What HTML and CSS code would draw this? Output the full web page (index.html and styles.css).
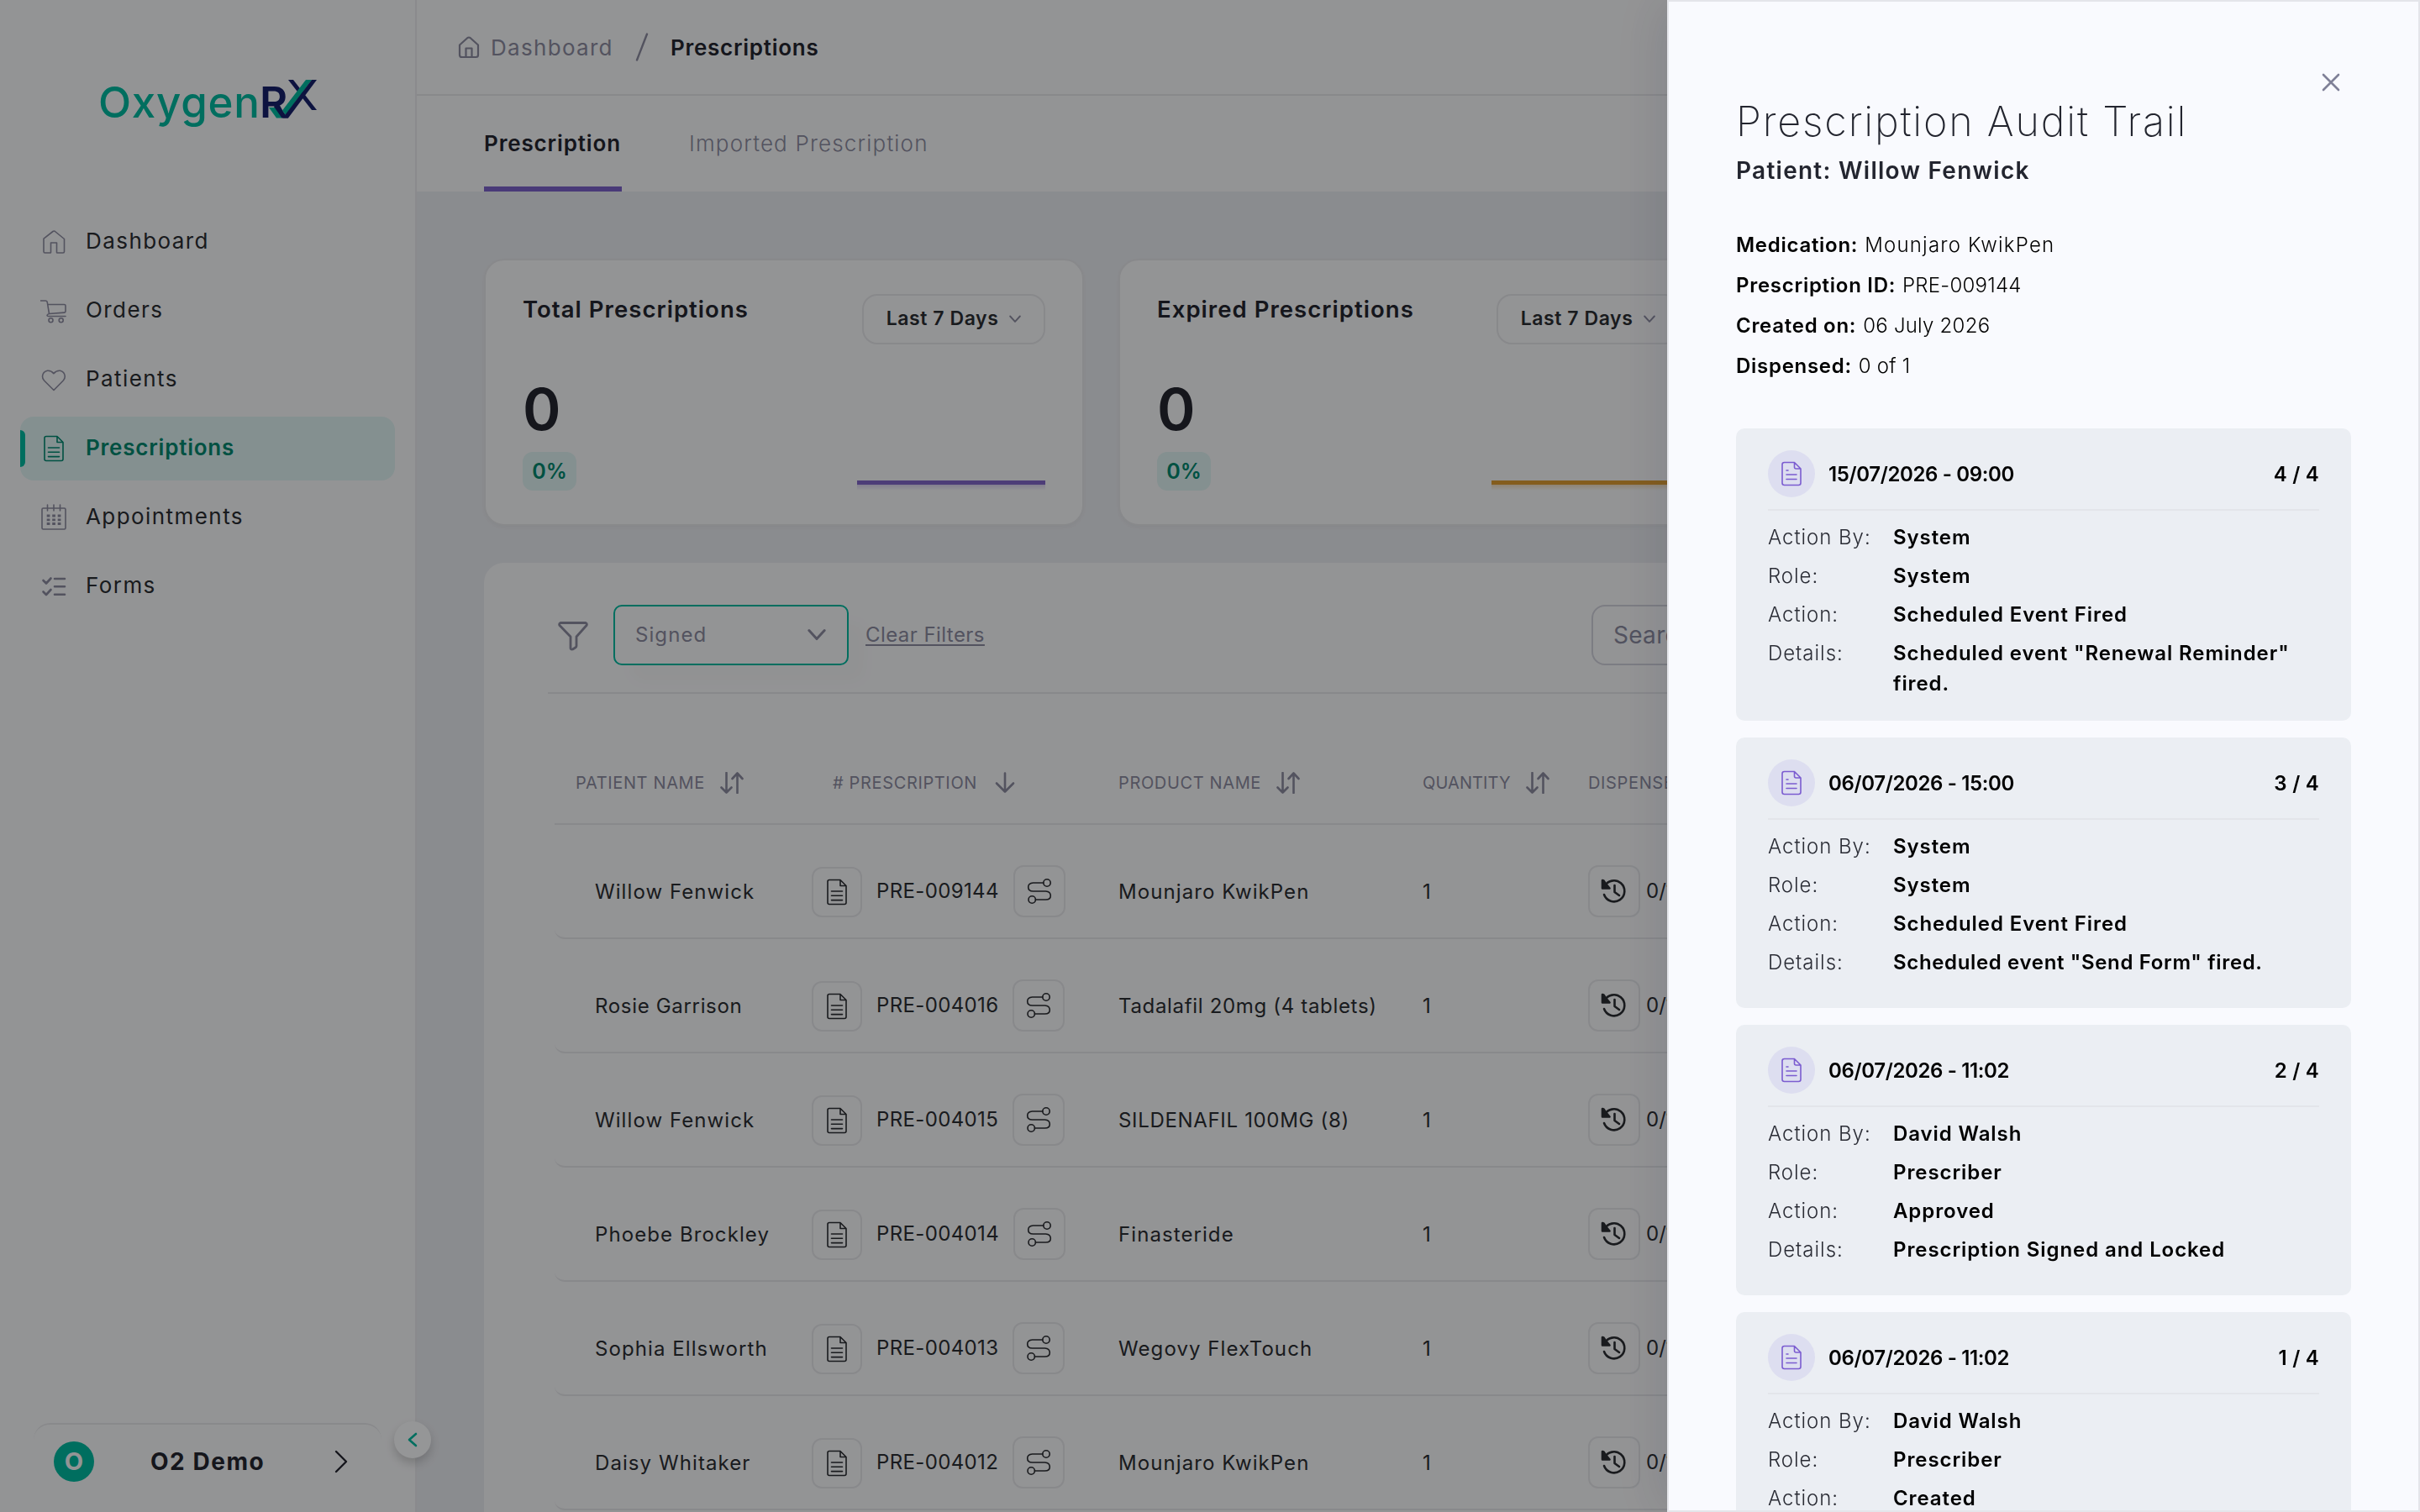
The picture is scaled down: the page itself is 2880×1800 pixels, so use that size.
FILE: index.html
```html
<!DOCTYPE html>
<html lang="en">
<head>
    <meta charset="UTF-8">
    <meta name="viewport" content="width=device-width, initial-scale=1.0">
    <title>OxygenRX - Prescriptions</title>
    <link rel="stylesheet" href="styles.css">
</head>
<body>

<!-- Icon sprite -->
<svg class="sprite" width="0" height="0">
    <symbol id="i-home" viewBox="0 0 32 32"><path d="M4 13.5V27.5Q4 29 5.5 29H12Q12.5 29 12.5 28.5V17H19.5V28.5Q19.500 29 20 29H27Q28.500 29 28.500 27.500V12.500L17.500 3.500Q16.250 2.600 15 3.500L4 12.200Z"/></symbol>
    <symbol id="i-cart" viewBox="0 0 32 32"><path d="M.5 4H6Q8 4 8.300 6L10.500 19.500Q8 20.200 8 21.500Q8 22.500 10 22.500H30M9 8.500H28.500Q30 8.500 30 10V16.500Q30 18 28.500 18.100L10.500 19.500"/><circle cx="12.500" cy="27.300" r="2.500"/><circle cx="24.700" cy="27.300" r="2.500"/></symbol>
    <symbol id="i-heart" viewBox="0 0 32 32"><path d="M16 28.500L4.500 17Q2.500 15 2.500 12Q3 6.500 8.500 5.300Q13 5 15.900 8.700Q19 5 23.500 5.300Q28.700 6.500 29.300 12Q29.300 15 27.300 17Z"/></symbol>
    <symbol id="i-doc" viewBox="0 0 32 32"><path d="M20 1.500H7Q5 1.500 5 3.500V28.500Q5 30.500 7 30.500H25Q27 30.500 27 28.500V8.500ZM20 1.500V8.500H27M9.500 15H22.500M9.500 20.300H22.500M9.500 25.600H22.500"/></symbol>
    <symbol id="i-note" viewBox="0 0 32 32"><path d="M19.500 2.500H7.500Q5 2.500 5 5V27Q5 29.500 7.500 29.500H24.500Q27 29.500 27 27V10L19.500 2.500V8Q19.500 10 21.500 10H27M10 12H12M10 17H22M10 22.500H22"/></symbol>
    <symbol id="i-calendar" viewBox="0 0 32 32"><rect x="2" y="5" width="28" height="25" rx="1.500"/><path d="M8.500 1V8M16 1V8M23.500 1V8"/><path class="cells" d="M7.700 14H11.400M14.200 14H17.900M20.700 14H24.400M7.700 18.800H11.400M14.200 18.800H17.900M20.700 18.800H24.400M7.700 23.500H11.400M14.200 23.500H17.900M20.700 23.500H24.400"/></symbol>
    <symbol id="i-checks" viewBox="0 0 32 32"><path d="M3.500 9L7 12.500L12.500 6.500M3.500 22.500L7 26L12.500 20M17 7H29M17 16.300H29M17 25.700H29"/></symbol>
    <symbol id="i-down" viewBox="0 0 24 24"><path d="M2 6L12 17L22 6"/></symbol>
    <symbol id="i-filter" viewBox="0 0 36 36"><path d="M3 2.500H33Q35 3.500 34 5.500L22 19V30Q22 31 21 31.800L17.500 34Q15 34.500 15 32.500V19L2 5.500Q1 3.500 3 2.500Z"/></symbol>
    <symbol id="i-sort" viewBox="0 0 28 26"><path d="M7.500 1V24.500M1.500 18.500L7.500 24.500L13.500 18.500M20.500 25V1.500M14.500 8L20.500 1.500L26.500 8"/></symbol>
    <symbol id="i-arrow" viewBox="0 0 24 26"><path d="M12 1.500V23.500M2 13.500L12 23.500L22 13.500"/></symbol>
    <symbol id="i-route" viewBox="0 0 32 32"><circle cx="25" cy="6" r="4.200"/><circle cx="7.200" cy="26" r="4.200"/><path d="M20.800 6H8.500Q2.700 6.500 2.700 11Q2.700 16 8.500 16H23.500Q29.300 16.500 29.300 21.300Q29.300 26 23.500 26H11.400"/></symbol>
    <symbol id="i-history" viewBox="0 0 32 32"><path d="M4.500 10.500A12.500 12.500 0 1 1 4 20M16.500 9V17L22 21"/><path class="solid" d="M2 3L3.500 3.500L5.500 6.500L10.500 12.500H2Z"/></symbol>
</svg>

<div class="layout">
    <aside class="sidebar">
        <div class="logo">
            <span class="logo-oxygen">Oxygen</span><span class="logo-r">R</span>
            <svg class="logo-mark" viewBox="0 0 66 48">
                <path class="teal" d="M8 34H16L24 46.500H17Z"/>
                <path class="navy" d="M31 1H37L65 37H59Z"/>
                <path class="navy" d="M14 33L18 31L31 46.500H23.500Z"/>
                <path class="teal" d="M52 1H59L28 43L24 37.500Z"/>
                <path class="navy" d="M59 1H65L31 46.500H24.500Z"/>
            </svg>
        </div>
        <nav class="menu">
            <a href="#"><svg><use href="#i-home"/></svg>Dashboard</a>
            <a href="#"><svg><use href="#i-cart"/></svg>Orders</a>
            <a href="#"><svg><use href="#i-heart"/></svg>Patients</a>
            <a href="#" class="active"><svg><use href="#i-doc"/></svg>Prescriptions</a>
            <a href="#"><svg><use href="#i-calendar"/></svg>Appointments</a>
            <a href="#"><svg class="bold"><use href="#i-checks"/></svg>Forms</a>
        </nav>
        <div class="account">
            <span class="avatar">O</span>
            <span class="account-name">O2 Demo</span>
            <svg class="account-arrow" viewBox="0 0 16 28"><path d="M2 2L14 14L2 26"/></svg>
        </div>
        <button class="collapse"><svg viewBox="0 0 12 18"><path d="M10 2L2 9L10 16"/></svg></button>
    </aside>

    <main class="main">
        <header class="breadcrumb">
            <svg class="crumb-home" viewBox="0 0 28 28"><path d="M3 11.500L12.500 3Q14 2 15.500 3L25 11.500V23.500Q25 26 22.500 26H5.500Q3 26 3 23.500ZM10.500 26V15.500H17.500V26"/></svg>
            <a href="#">Dashboard</a>
            <svg class="slash" viewBox="0 0 16 34"><path d="M14 1.500L2 32.500"/></svg>
            <span class="current">Prescriptions</span>
        </header>
        <div class="tabs">
            <a href="#" class="tab selected">Prescription</a>
            <a href="#" class="tab">Imported Prescription</a>
        </div>

        <div class="content">
            <div class="stats">
                <div class="stat-card">
                    <div class="stat-top">
                        <h3>Total Prescriptions</h3>
                        <button class="range">Last 7 Days <svg><use href="#i-down"/></svg></button>
                    </div>
                    <div class="stat-value">0</div>
                    <div class="stat-bottom">
                        <span class="percent">0%</span>
                        <div class="trend purple"></div>
                    </div>
                </div>
                <div class="stat-card">
                    <div class="stat-top">
                        <h3>Expired Prescriptions</h3>
                        <button class="range">Last 7 Days <svg><use href="#i-down"/></svg></button>
                    </div>
                    <div class="stat-value">0</div>
                    <div class="stat-bottom">
                        <span class="percent">0%</span>
                        <div class="trend orange"></div>
                    </div>
                </div>
            </div>

            <div class="table-card">
                <div class="filters">
                    <svg class="filter-icon"><use href="#i-filter"/></svg>
                    <div class="select">Signed <svg><use href="#i-down"/></svg></div>
                    <div class="clear"><a href="#">Clear Filters</a></div>
                    <div class="search">Search</div>
                </div>
                <div class="table">
                    <div class="thead">
                        <div>PATIENT NAME <svg><use href="#i-sort"/></svg></div>
                        <div># PRESCRIPTION <svg class="single"><use href="#i-arrow"/></svg></div>
                        <div>PRODUCT NAME <svg><use href="#i-sort"/></svg></div>
                        <div class="qty">QUANTITY <svg><use href="#i-sort"/></svg></div>
                        <div>DISPENSED</div>
                    </div>
                    <div class="row">
                        <div class="name">Willow Fenwick</div>
                        <div class="rx"><button class="icon-btn small"><svg><use href="#i-doc"/></svg></button><span>PRE-009144</span><button class="icon-btn"><svg><use href="#i-route"/></svg></button></div>
                        <div>Mounjaro KwikPen</div>
                        <div>1</div>
                        <div class="disp"><button class="icon-btn"><svg class="thick"><use href="#i-history"/></svg></button>0/1</div>
                    </div>
                    <div class="row">
                        <div class="name tight">Rosie Garrison</div>
                        <div class="rx"><button class="icon-btn small"><svg><use href="#i-doc"/></svg></button><span>PRE-004016</span><button class="icon-btn"><svg><use href="#i-route"/></svg></button></div>
                        <div class="tight">Tadalafil 20mg (4 tablets)</div>
                        <div>1</div>
                        <div class="disp"><button class="icon-btn"><svg class="thick"><use href="#i-history"/></svg></button>0/1</div>
                    </div>
                    <div class="row">
                        <div class="name">Willow Fenwick</div>
                        <div class="rx"><button class="icon-btn small"><svg><use href="#i-doc"/></svg></button><span>PRE-004015</span><button class="icon-btn"><svg><use href="#i-route"/></svg></button></div>
                        <div class="tight">SILDENAFIL 100MG (8)</div>
                        <div>1</div>
                        <div class="disp"><button class="icon-btn"><svg class="thick"><use href="#i-history"/></svg></button>0/1</div>
                    </div>
                    <div class="row">
                        <div class="name">Phoebe Brockley</div>
                        <div class="rx"><button class="icon-btn small"><svg><use href="#i-doc"/></svg></button><span>PRE-004014</span><button class="icon-btn"><svg><use href="#i-route"/></svg></button></div>
                        <div>Finasteride</div>
                        <div>1</div>
                        <div class="disp"><button class="icon-btn"><svg class="thick"><use href="#i-history"/></svg></button>0/1</div>
                    </div>
                    <div class="row">
                        <div class="name">Sophia Ellsworth</div>
                        <div class="rx"><button class="icon-btn small"><svg><use href="#i-doc"/></svg></button><span>PRE-004013</span><button class="icon-btn"><svg><use href="#i-route"/></svg></button></div>
                        <div>Wegovy FlexTouch</div>
                        <div>1</div>
                        <div class="disp"><button class="icon-btn"><svg class="thick"><use href="#i-history"/></svg></button>0/1</div>
                    </div>
                    <div class="row">
                        <div class="name">Daisy Whitaker</div>
                        <div class="rx"><button class="icon-btn small"><svg><use href="#i-doc"/></svg></button><span>PRE-004012</span><button class="icon-btn"><svg><use href="#i-route"/></svg></button></div>
                        <div>Mounjaro KwikPen</div>
                        <div>1</div>
                        <div class="disp"><button class="icon-btn"><svg class="thick"><use href="#i-history"/></svg></button>0/1</div>
                    </div>
                </div>
            </div>
        </div>
    </main>
</div>

<div class="overlay"></div>

<section class="drawer">
    <button class="close"><svg viewBox="0 0 22 22"><path d="M2 2L20 20M20 2L2 20"/></svg></button>
    <h1>Prescription Audit Trail</h1>
    <h2>Patient: Willow Fenwick</h2>
    <div class="meta">
        <p><b>Medication:</b> Mounjaro KwikPen</p>
        <p><b>Prescription ID:</b> <span class="digits">PRE-009144</span></p>
        <p><b>Created on:</b> <span class="digits">06 July 2026</span></p>
        <p><b>Dispensed:</b> <span class="digits">0 of 1</span></p>
    </div>

    <div class="events">
        <article class="event">
            <div class="event-head"><span class="event-icon"><svg><use href="#i-note"/></svg></span><time>15/07/2026 - 09:00</time><span class="count">4 / 4</span></div>
            <dl>
                <dt>Action By:</dt><dd>System</dd>
                <dt>Role:</dt><dd>System</dd>
                <dt>Action:</dt><dd>Scheduled Event Fired</dd>
                <dt>Details:</dt><dd>Scheduled event "Renewal Reminder" fired.</dd>
            </dl>
        </article>
        <article class="event">
            <div class="event-head"><span class="event-icon"><svg><use href="#i-note"/></svg></span><time>06/07/2026 - 15:00</time><span class="count">3 / 4</span></div>
            <dl>
                <dt>Action By:</dt><dd>System</dd>
                <dt>Role:</dt><dd>System</dd>
                <dt>Action:</dt><dd>Scheduled Event Fired</dd>
                <dt>Details:</dt><dd class="dense">Scheduled event "Send Form" fired.</dd>
            </dl>
        </article>
        <article class="event">
            <div class="event-head"><span class="event-icon"><svg><use href="#i-note"/></svg></span><time>06/07/2026 - 11:02</time><span class="count">2 / 4</span></div>
            <dl>
                <dt>Action By:</dt><dd>David Walsh</dd>
                <dt>Role:</dt><dd>Prescriber</dd>
                <dt>Action:</dt><dd>Approved</dd>
                <dt>Details:</dt><dd>Prescription Signed and Locked</dd>
            </dl>
        </article>
        <article class="event">
            <div class="event-head"><span class="event-icon"><svg><use href="#i-note"/></svg></span><time>06/07/2026 - 11:02</time><span class="count">1 / 4</span></div>
            <dl>
                <dt>Action By:</dt><dd>David Walsh</dd>
                <dt>Role:</dt><dd>Prescriber</dd>
                <dt>Action:</dt><dd>Created</dd>
            </dl>
        </article>
    </div>
</section>

</body>
</html>
```
FILE: styles.css
```css
* {
    box-sizing: border-box;
}

body {
    margin: 0;
    height: 100vh;
    overflow: hidden;
    font-family: Inter, sans-serif;
    font-size: 24px;
    font-weight: 400;
    letter-spacing: 0.045em;
    color: #2b2d32;
    background-color: #e7e9ee;
}

a {
    color: inherit;
    text-decoration: none;
}

button {
    font: inherit;
    letter-spacing: inherit;
    color: inherit;
    background: none;
    border: none;
    padding: 0;
}

h1, h2, h3, p, dl, dd {
    margin: 0;
}

svg {
    fill: none;
    stroke: currentColor;
    stroke-width: 1.6;
    stroke-linecap: round;
    stroke-linejoin: round;
    flex-shrink: 0;
}

.sprite {
    position: absolute;
}

.cells {
    stroke-width: 2.8;
    stroke-linecap: butt;
}

.solid {
    fill: currentColor;
}

.layout {
    display: flex;
    height: 100vh;
    overflow: hidden;
}

/* Sidebar */
.sidebar {
    position: relative;
    width: 496px;
    flex-shrink: 0;
    display: flex;
    flex-direction: column;
    background-color: #f6f7f9;
    border-right: 2px solid #e6e7eb;
}

.logo {
    display: flex;
    height: 248px;
    padding: 90px 0 0 117px;
    line-height: 64px;
    font-size: 51px;
    letter-spacing: 0;
}

.logo-oxygen {
    width: 192px;
    font-weight: 450;
    letter-spacing: 0.015em;
    color: #00b89f;
}

.logo-r {
    width: 3px;
    color: #16216b;
    font-weight: 600;
}

.logo-mark {
    width: 66px;
    height: 48px;
    margin-top: 4px;
    stroke: none;
}

.teal {
    fill: #00b89f;
}

.navy {
    fill: #16216b;
}

.menu {
    display: flex;
    flex-direction: column;
    gap: 6px;
    padding: 2px 24px 0;
    font-size: 26px;
    letter-spacing: 0.055em;
}

.menu a {
    position: relative;
    display: flex;
    align-items: center;
    gap: 22px;
    height: 76px;
    padding: 0 0 3px 24px;
    border-radius: 16px;
}

.menu svg {
    width: 32px;
    height: 32px;
    margin-top: 3px;
    color: #8a8a9f;
}

.menu .bold {
    stroke-width: 2.6;
}

.menu .active {
    background-color: #dcf0f0;
    color: #00876f;
    font-weight: 600;
    letter-spacing: 0.03em;
    overflow: hidden;
}

.menu .active svg {
    color: #00876f;
}

.menu .active::before {
    content: "";
    position: absolute;
    left: 0;
    top: 16px;
    width: 6px;
    height: 44px;
    border-radius: 0 6px 6px 0;
    background-color: #00b89f;
}

.account {
    display: flex;
    align-items: center;
    width: 414px;
    height: 106px;
    margin: auto 0 0 40px;
    padding: 0 40px 16px 24px;
    border-top: 2px solid #e3e4e8;
    border-radius: 20px 20px 0 0;
    color: #23252f;
}

.avatar {
    width: 48px;
    height: 48px;
    border-radius: 50%;
    background-color: #00b89f;
    color: #f6f7f9;
    font-size: 29px;
    font-weight: 700;
    line-height: 48px;
    text-align: center;
    letter-spacing: 0;
}

.account-name {
    flex: 1;
    padding-left: 67px;
    font-size: 28px;
    font-weight: 700;
    letter-spacing: 0.055em;
}

.account-arrow {
    width: 16px;
    height: 28px;
    stroke-width: 2.4;
}

.collapse {
    position: absolute;
    left: 469px;
    top: 1692px;
    width: 44px;
    height: 44px;
    border-radius: 50%;
    background-color: #f9fafc;
    box-shadow: 0 6px 12px rgba(0, 0, 0, 0.18);
    color: #00b89f;
    z-index: 2;
}

.collapse svg {
    display: block;
    width: 12px;
    height: 18px;
    margin: 0 auto;
    stroke-width: 2.6;
}

/* Header */
.main {
    flex: 1;
    min-width: 0;
}

.breadcrumb {
    display: flex;
    align-items: center;
    height: 114px;
    padding-left: 48px;
    background-color: #f6f7f9;
    border-bottom: 2px solid #e3e4e8;
    font-size: 26px;
    color: #8a8a9f;
}

.crumb-home {
    width: 28px;
    height: 28px;
    margin-right: 12px;
    stroke-width: 2.2;
}

.breadcrumb a {
    width: 172px;
    letter-spacing: 0.05em;
}

.slash {
    width: 16px;
    height: 34px;
    margin-right: 26px;
    stroke-width: 2.4;
}

.current {
    color: #23252f;
    font-weight: 600;
    letter-spacing: 0.028em;
}

.tabs {
    display: flex;
    gap: 80px;
    height: 114px;
    padding-left: 80px;
    background-color: #f6f7f9;
    font-size: 26px;
}

.tab {
    height: 114px;
    line-height: 114px;
    color: #8a8a9f;
    font-weight: 300;
    letter-spacing: 0.045em;
}

.selected {
    width: 164px;
    white-space: nowrap;
    border-bottom: 6px solid #7a62c9;
    color: #23252f;
    font-weight: 600;
    letter-spacing: 0.033em;
}

/* Stat cards */
.content {
    width: 2224px;
    padding: 80px 0 0 80px;
}

.stats {
    display: grid;
    grid-template-columns: 714px 714px;
    gap: 41px;
}

.stat-card {
    height: 318px;
    padding: 40px 44px;
    background-color: #f6f7f9;
    border: 2px solid #e3e4e8;
    border-radius: 24px;
    box-shadow: 0 2px 4px rgba(0, 0, 0, 0.03);
}

.stat-top {
    display: flex;
    justify-content: space-between;
    height: 104px;
}

.stat-card h3 {
    font-size: 27.5px;
    line-height: 37px;
    font-weight: 600;
    letter-spacing: 0.038em;
    color: #23252f;
}

.range {
    display: flex;
    align-items: center;
    justify-content: center;
    gap: 13px;
    width: 218px;
    height: 60px;
    padding-bottom: 3px;
    border: 2px solid #e3e4e8;
    border-radius: 18px;
    font-size: 23px;
    font-weight: 600;
    letter-spacing: 0.025em;
}

.range svg {
    width: 14px;
    height: 14px;
    margin-top: 2px;
    stroke-width: 3.2;
    color: #8a8a9f;
}

.stat-value {
    height: 84px;
    font-size: 69px;
    line-height: 66px;
    font-weight: 600;
    letter-spacing: 0;
    color: #23252f;
}

.stat-bottom {
    display: flex;
    justify-content: space-between;
}

.percent {
    width: 64px;
    height: 46px;
    border-radius: 12px;
    background-color: #dcf0f0;
    color: #00876f;
    font-size: 25px;
    line-height: 47px;
    font-weight: 600;
    letter-spacing: 0;
    text-align: center;
}

.trend {
    width: 224px;
    height: 12px;
    margin-top: 34px;
    border-top: 5px solid #8066c8;
    background-image: linear-gradient(#dad3ee, #f6f7f9);
}

.orange {
    border-top-color: #dc9c33;
    background-image: linear-gradient(#efdcc0, #f6f7f9);
}

/* Table */
.table-card {
    width: 2224px;
    height: 1300px;
    margin-top: 44px;
    background-color: #f6f7f9;
    border-radius: 24px;
}

.filters {
    display: flex;
    align-items: center;
    height: 156px;
    margin-left: 76px;
    padding: 17px 0 0 12px;
    border-bottom: 2px solid #e3e4e8;
    color: #8a8a9f;
}

.filter-icon {
    width: 36px;
    height: 36px;
    margin: 2px 29px 0 0;
    stroke-width: 2.8;
}

.select {
    display: flex;
    align-items: center;
    justify-content: space-between;
    width: 280px;
    height: 72px;
    margin: 0 20px 0 1px;
    padding: 0 25px 0 24px;
    border: 2px solid #00b89f;
    border-radius: 10px;
    box-shadow: 20px 20px 20px rgba(0, 0, 0, 0.02);
}

.select svg {
    width: 22px;
    height: 22px;
    stroke-width: 3.2;
}

.clear {
    width: 864px;
    letter-spacing: 0.018em;
}

.clear a {
    text-decoration: underline;
    text-underline-offset: 3px;
}

.search {
    width: 600px;
    height: 72px;
    padding-left: 24px;
    border: 2px solid #cfd0da;
    border-radius: 16px;
    font-size: 28px;
    line-height: 68px;
    letter-spacing: 0.01em;
}

.table {
    margin-left: 84px;
}

.thead, .row {
    display: grid;
    grid-template-columns: 306px 365px 362px 197px 1fr;
    align-items: center;
}

.thead {
    height: 156px;
    padding-top: 56px;
    align-items: start;
    border-bottom: 2px solid #e3e4e8;
    color: #8a8a9f;
    font-size: 20px;
    letter-spacing: 0.032em;
}

.thead div {
    display: flex;
    align-items: center;
    gap: 18px;
    height: 99px;
}

.thead div:nth-child(-n+2) {
    padding-left: 25px;
}

.thead .qty {
    letter-spacing: 0.005em;
}

.thead svg {
    width: 28px;
    height: 26px;
    stroke-width: 2.6;
}

.thead .single {
    width: 24px;
    margin-left: 3px;
}

.row {
    height: 136px;
    border-bottom: 2px solid #e3e4e8;
    border-radius: 12px;
    padding-top: 24px;
}

.row .name {
    padding-left: 48px;
}

.rx, .disp {
    display: flex;
    align-items: flex-end;
    line-height: 62px;
}

.rx span {
    margin: 0 17px 0 17px;
    letter-spacing: 0.015em;
}

.row .tight {
    letter-spacing: 0.028em;
}

.icon-btn {
    display: flex;
    align-items: center;
    justify-content: center;
    width: 62px;
    height: 62px;
    border: 2px solid #e3e4e8;
    border-radius: 12px;
}

.small {
    width: 60px;
    height: 60px;
}

.icon-btn svg {
    width: 32px;
    height: 32px;
}

.icon-btn .thick {
    stroke-width: 2.6;
}

.disp {
    gap: 7px;
    letter-spacing: 0;
}

.overlay {
    position: fixed;
    inset: 0;
    background-color: rgba(0, 0, 0, 0.4);
    z-index: 5;
}

/* Audit trail drawer */
.drawer {
    position: fixed;
    top: 0;
    right: 0;
    width: 896px;
    height: 100vh;
    padding: 112px 80px 0;
    overflow: hidden;
    background-color: #f9fafe;
    border: 2px solid #e4e5ea;
    box-shadow: -6px 0 60px rgba(30, 35, 60, 0.14);
    z-index: 10;
}

.close {
    position: absolute;
    top: 85px;
    right: 93px;
    width: 22px;
    height: 22px;
    color: #7f8097;
}

.close svg {
    display: block;
    stroke-width: 2.6;
}

.drawer h1 {
    font-size: 48.5px;
    line-height: 62px;
    font-weight: 250;
    letter-spacing: 0.037em;
    color: #23252f;
}

.drawer h2 {
    font-size: 28px;
    line-height: 54px;
    font-weight: 600;
    letter-spacing: 0.045em;
    color: #23252f;
}

.meta {
    margin: 38px 0 50px;
    color: #000;
    font-weight: 300;
    line-height: 48px;
    letter-spacing: 0.05em;
}

.meta b {
    font-weight: 600;
    letter-spacing: 0.03em;
}

.meta .digits {
    letter-spacing: 0.01em;
}

.events {
    display: flex;
    flex-direction: column;
    gap: 20px;
    width: 732px;
}

.event {
    padding: 26px 38px;
    border-radius: 10px;
    background-color: #ebeef3;
    color: #000;
}

.event-head {
    display: flex;
    align-items: center;
    height: 72px;
    padding-bottom: 14px;
    border-bottom: 2px solid #e3e5ea;
    font-weight: 600;
    letter-spacing: -0.015em;
}

.event-icon {
    display: flex;
    align-items: center;
    justify-content: center;
    width: 56px;
    height: 56px;
    margin-right: 16px;
    border-radius: 50%;
    background-color: #dddef0;
    color: #7b5cd0;
}

.event-icon svg {
    width: 32px;
    height: 32px;
}

.count {
    margin-left: auto;
    letter-spacing: 0.01em;
}

.event dl {
    display: grid;
    grid-template-columns: 149px 1fr;
    grid-auto-rows: minmax(46px, auto);
    padding-top: 14px;
    line-height: 36px;
}

.event dt {
    font-weight: 300;
    color: #2a2c35;
    letter-spacing: 0.04em;
}

.event dd {
    font-weight: 600;
    letter-spacing: 0.038em;
}

.event .dense {
    letter-spacing: 0.027em;
}
```
